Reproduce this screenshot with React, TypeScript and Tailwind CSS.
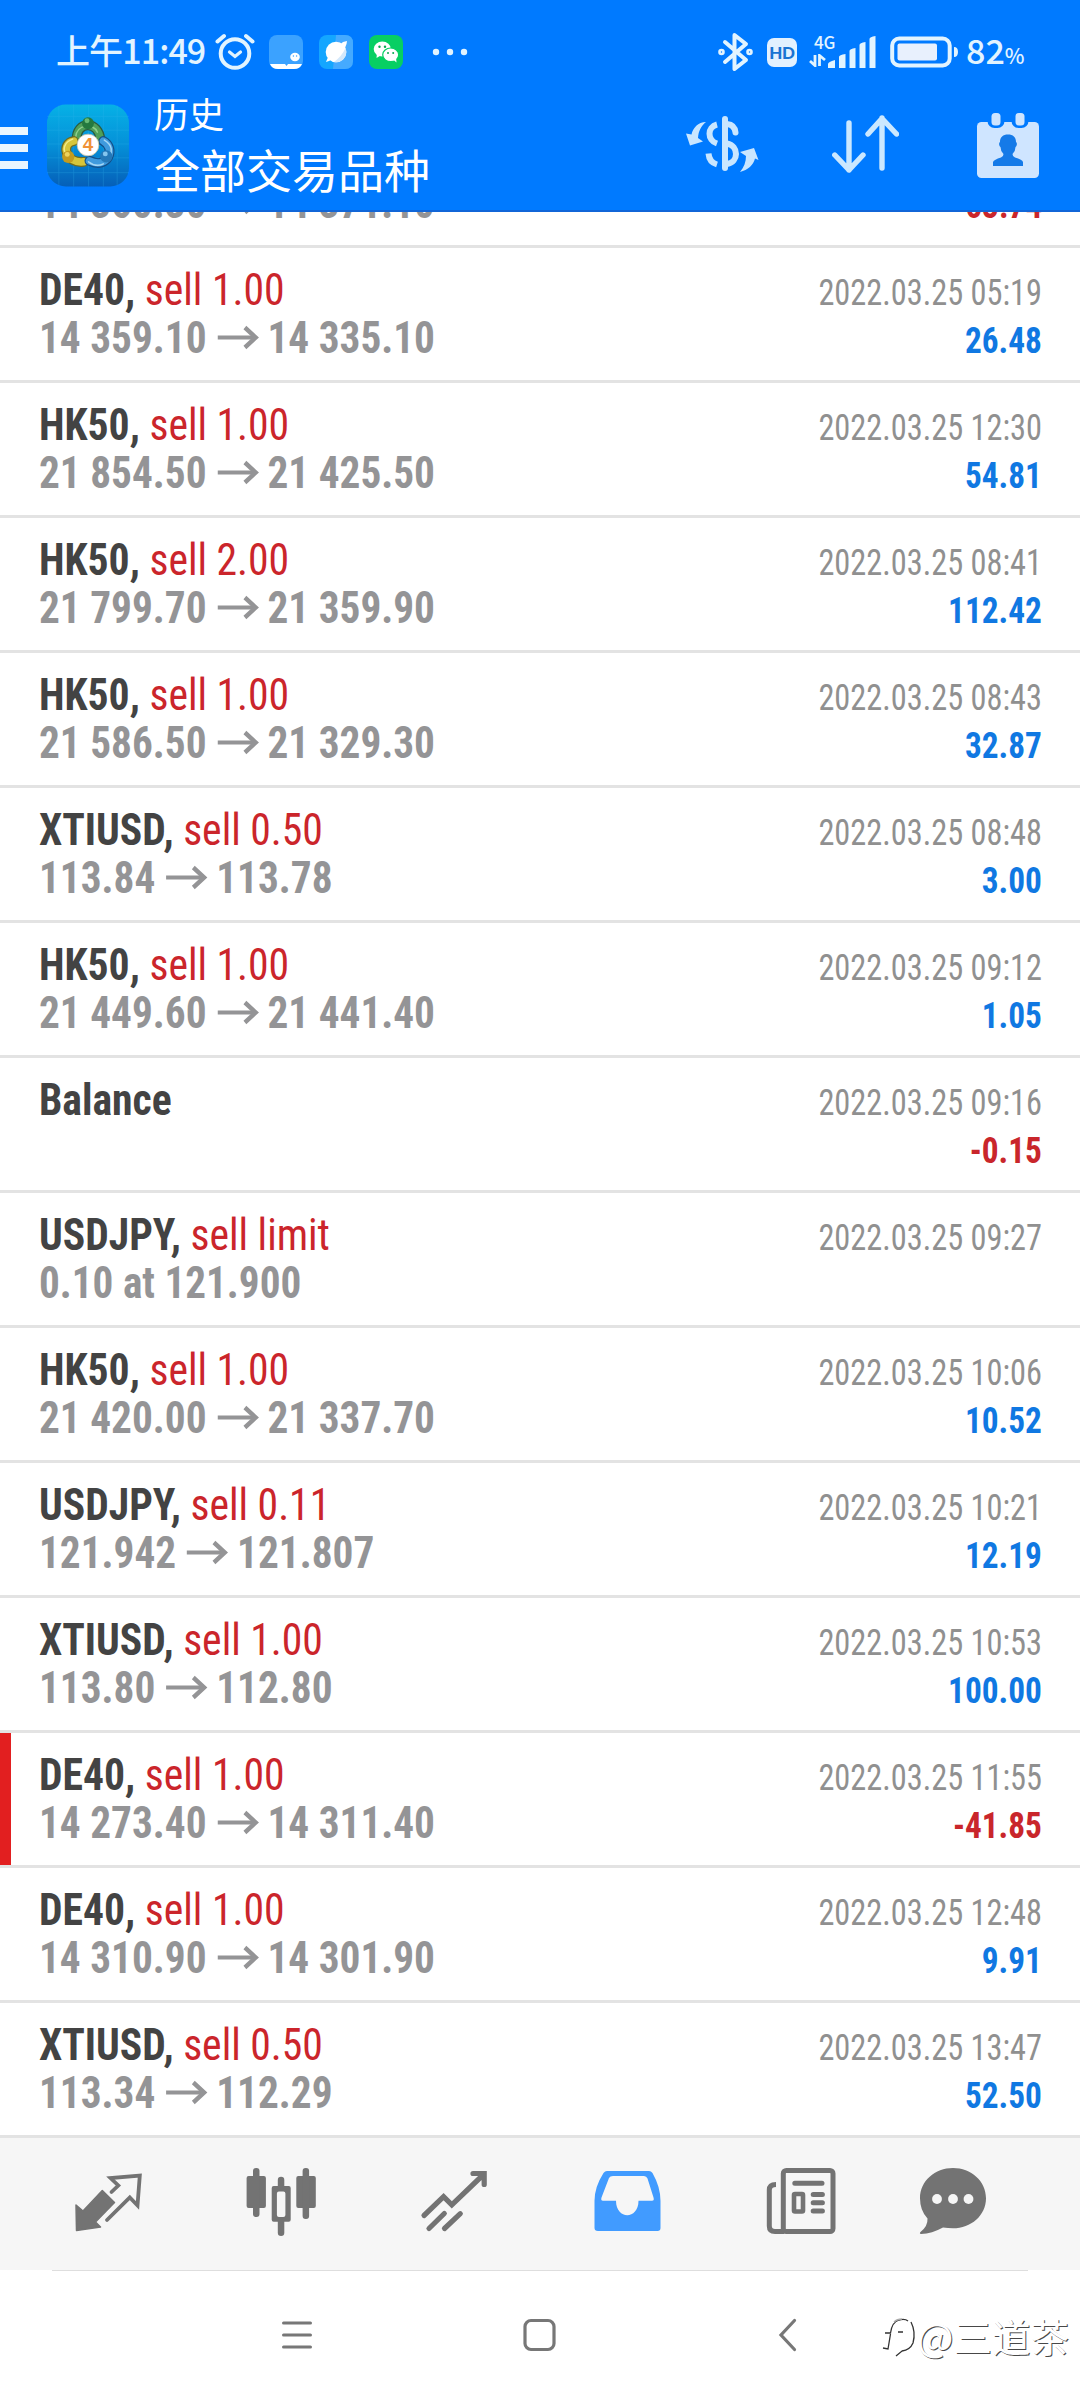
import type { ReactNode } from "react";

type Deal = {
  symbol?: string;
  action?: string;
  open?: string;
  close?: string;
  note?: string;
  time?: string;
  profit?: string;
  flagged?: boolean;
};

const deals: Deal[] = [
  { symbol: "DE40", action: "sell 1.00", open: "14 359.10", close: "14 335.10", time: "2022.03.25 05:19", profit: "26.48" },
  { symbol: "HK50", action: "sell 1.00", open: "21 854.50", close: "21 425.50", time: "2022.03.25 12:30", profit: "54.81" },
  { symbol: "HK50", action: "sell 2.00", open: "21 799.70", close: "21 359.90", time: "2022.03.25 08:41", profit: "112.42" },
  { symbol: "HK50", action: "sell 1.00", open: "21 586.50", close: "21 329.30", time: "2022.03.25 08:43", profit: "32.87" },
  { symbol: "XTIUSD", action: "sell 0.50", open: "113.84", close: "113.78", time: "2022.03.25 08:48", profit: "3.00" },
  { symbol: "HK50", action: "sell 1.00", open: "21 449.60", close: "21 441.40", time: "2022.03.25 09:12", profit: "1.05" },
  { symbol: "Balance", time: "2022.03.25 09:16", profit: "-0.15" },
  { symbol: "USDJPY", action: "sell limit", note: "0.10 at 121.900", time: "2022.03.25 09:27" },
  { symbol: "HK50", action: "sell 1.00", open: "21 420.00", close: "21 337.70", time: "2022.03.25 10:06", profit: "10.52" },
  { symbol: "USDJPY", action: "sell 0.11", open: "121.942", close: "121.807", time: "2022.03.25 10:21", profit: "12.19" },
  { symbol: "XTIUSD", action: "sell 1.00", open: "113.80", close: "112.80", time: "2022.03.25 10:53", profit: "100.00" },
  { symbol: "DE40", action: "sell 1.00", open: "14 273.40", close: "14 311.40", time: "2022.03.25 11:55", profit: "-41.85", flagged: true },
  { symbol: "DE40", action: "sell 1.00", open: "14 310.90", close: "14 301.90", time: "2022.03.25 12:48", profit: "9.91" },
  { symbol: "XTIUSD", action: "sell 0.50", open: "113.34", close: "112.29", time: "2022.03.25 13:47", profit: "52.50" },
];

function PriceArrow() {
  return (
    <svg className="ml-[11px] mr-[9px]" width="45" height="29" viewBox="0 0 45 29" fill="none" stroke="#949496">
      <path d="M0.5 12.5H41" strokeWidth="4" />
      <path d="M29.5 2.5 41 12.5 29.5 22.5" strokeWidth="4.6" />
    </svg>
  );
}

function DealRow({ deal }: { deal: Deal }) {
  const profitColor = deal.profit?.startsWith("-") ? "text-[#c9262b]" : "text-[#1078e2]";
  return (
    <li className="flex h-[135px] shrink-0 list-none border-b-[3px] border-[#e3e3e3]">
      <div className={deal.flagged ? "w-[11px] bg-[#e21f20]" : "w-[11px]"} />
      <div className="flex flex-1 items-start justify-between pt-[18px] pr-[38px] pl-[28px]">
        <div className="text-[44px] leading-[48px] whitespace-pre">
          <div className="h-[48px] w-max origin-left scale-x-[0.946]">
            {deal.symbol && <span className="font-bold text-[#434343]">{deal.action ? deal.symbol + "," : deal.symbol}</span>}
            {deal.action && <span className="text-[#cb252b]"> {deal.action}</span>}
          </div>
          {deal.open && (
            <div className="flex w-max origin-left scale-x-[0.938] font-bold text-[#949496]">
              <span>{deal.open}</span>
              <span className="flex pt-[11px]"><PriceArrow /></span>
              <span>{deal.close}</span>
            </div>
          )}
          {deal.note && <div className="w-max origin-left scale-x-[0.936] font-bold text-[#949496]">{deal.note}</div>}
        </div>
        <div className="pt-[3px] text-right text-[36px] leading-[48px]">
          <div className="h-[48px] origin-right scale-x-[0.898] text-[#909090]">{deal.time}</div>
          {deal.profit && <div className={"origin-right scale-x-[0.925] font-bold " + profitColor}>{deal.profit}</div>}
        </div>
      </div>
    </li>
  );
}

function StatusBar() {
  return (
    <div className="flex h-[92px] items-center pt-[12px] pl-[56px] text-[#e2f4ff]">
      <div className="w-[159px] text-[34px] leading-[34px] font-medium tracking-[-0.9px] whitespace-nowrap">
        <span className="inline-block -translate-y-[2px]">上午11:49</span>
      </div>
      <svg width="40" height="38" viewBox="0 0 40 38" fill="none" stroke="currentColor" strokeLinecap="round">
        <circle cx="20" cy="20.5" r="14.3" strokeWidth="4" />
        <path d="M2.5 8.5 9 3M37.5 8.5 31 3" strokeWidth="4" />
        <path d="M14.5 19 20 23.5 25.5 19" strokeWidth="3.2" />
      </svg>
      <svg className="ml-[14px]" width="34" height="34" viewBox="0 0 34 34">
        <rect width="34" height="34" rx="8" fill="#3ba2ff" />
        <path d="M1 29H33Q31 34 25 34H9Q3 34 1 29Z" fill="#fff" />
        <path d="M16 29h3l-1.5 2z" fill="#3ba2ff" />
        <ellipse cx="26" cy="22" rx="4.8" ry="4.2" fill="#fff" />
        <circle cx="24.4" cy="21" r=".7" fill="#3ba2ff" />
        <circle cx="27.6" cy="21" r=".7" fill="#3ba2ff" />
      </svg>
      <svg className="ml-[16px]" width="34" height="34" viewBox="0 0 34 34">
        <rect width="34" height="34" rx="8" fill="#14a6ff" />
        <path d="M17 0h9q8 0 8 8v18q0 8-8 8H14z" fill="#45aaff" />
        <path d="M7 27Q9 19 24 7l4-1q-1 12-18 20Z" fill="#fff" />
        <circle cx="17" cy="17" r="10.3" fill="#fff" />
        <path d="M26.5 13A10.3 10.3 0 0 1 15 27Q23 21 26.5 13Z" fill="#d3e8fb" />
      </svg>
      <svg className="ml-[16px]" width="34" height="34" viewBox="0 0 34 34">
        <rect width="34" height="34" rx="8" fill="#07cf63" />
        <ellipse cx="13.3" cy="14" rx="8.6" ry="7.4" fill="#fff" />
        <path d="M8 18l-.5 5 5-3z" fill="#fff" />
        <ellipse cx="21.7" cy="19.8" rx="8" ry="6.8" fill="#fff" stroke="#07cf63" strokeWidth="1.2" />
        <path d="M24 24.5l3.5 3-.5-5z" fill="#fff" />
        <g fill="#07a850">
          <circle cx="10.5" cy="11.8" r="1.2" />
          <circle cx="16" cy="11.8" r="1.2" />
          <circle cx="19" cy="18" r="1" />
          <circle cx="24.2" cy="18" r="1" />
        </g>
      </svg>
      <svg className="ml-[29px]" width="38" height="8" viewBox="0 0 38 8" fill="currentColor">
        <circle cx="4" cy="4" r="3.2" />
        <circle cx="18" cy="4" r="3.2" />
        <circle cx="32" cy="4" r="3.2" />
      </svg>
      <svg className="ml-[247px]" width="38" height="40" viewBox="0 0 38 40" fill="none" stroke="currentColor" strokeWidth="4" strokeLinejoin="round" strokeLinecap="round">
        <path d="M8 10 29 28 17.5 37V3L29 12 8 30" />
        <circle cx="4.5" cy="20" r="1.3" />
        <circle cx="32.5" cy="20" r="1.3" />
      </svg>
      <div className="ml-[12px] flex h-[29px] w-[30px] items-center justify-center rounded-[7px] bg-[#e2f1ff] font-['Lato'] text-[17px] leading-none font-black tracking-[-0.3px] text-[#1a74d2]">HD</div>
      <div className="ml-[12px] flex h-[34px] w-[22px] flex-col items-start">
        <span className="ml-[5px] -translate-y-[1px] text-[17px] leading-[15px] font-medium tracking-[-0.3px]">4G</span>
        <svg className="mt-[4px]" width="18" height="13" viewBox="0 0 18 13" fill="none" stroke="currentColor" strokeWidth="2.8">
          <path d="M6 1V11.5L1 7M10.5 12V1.5L16 6" />
        </svg>
      </div>
      <svg className="ml-[-3px]" width="50" height="34" viewBox="0 0 50 34" fill="currentColor">
        <path d="M0 33v-4q0-2 7-4v8zM11 33V22q0-2 6.500-3v14zM21.500 33V16q0-2 6-3v20zM31.500 33V10q0-2 6-3v26zM41.500 33V4q0-2 6-3v32z" />
      </svg>
      <svg className="ml-[12px]" width="70" height="32" viewBox="0 0 70 32">
        <rect x="2.2" y="2.5" width="57.5" height="27" rx="7" fill="none" stroke="currentColor" strokeWidth="4" />
        <rect x="7.5" y="7.5" width="39.5" height="17" rx="2" fill="#e8f0fd" />
        <path d="M64 11q4 0 4 5t-4 5z" fill="currentColor" />
      </svg>
      <div className="ml-[6px] flex items-baseline leading-[34px] font-medium">
        <span className="text-[34px]">82</span>
        <span className="text-[21px]">%</span>
      </div>
    </div>
  );
}

function AppLogo() {
  return (
    <svg width="82" height="83" viewBox="0 0 83 83">
      <defs>
        <linearGradient id="tile" x1="0" y1="0" x2="0" y2="1">
          <stop offset="0" stopColor="#06b1e6" />
          <stop offset="0.5" stopColor="#0590d8" />
          <stop offset="1" stopColor="#055fb8" />
        </linearGradient>
      </defs>
      <rect width="83" height="83" rx="19" fill="url(#tile)" />
      <path d="M12 1V82M27 0V83M42 0V83M57 0V83M71 1V82M0 12H83M0 26H83M0 40H83M0 54H83M0 69H83" stroke="#35b6ee" strokeWidth="0.7" opacity="0.35" />
      <g fill="none" strokeLinecap="round">
        <path d="M30 36C29 16 53 16 54 36" stroke="#2c5b3d" strokeWidth="10" />
        <path d="M30 36C29 16 53 16 54 36" stroke="#4f9f59" strokeWidth="7.5" />
        <path d="M29 33C30 20 47 18 51 28" stroke="#8fd08d" strokeWidth="1.5" />
        <path d="M27 37C14 39 18 60 37 58" stroke="#6f6c20" strokeWidth="10" />
        <path d="M27 37C14 39 18 60 37 58" stroke="#d6c53a" strokeWidth="7.5" />
        <path d="M26 35C17 38 16 46 19 49" stroke="#f2eb8b" strokeWidth="1.5" />
        <path d="M57 37C70 44 62 66 43 57" stroke="#14508a" strokeWidth="10" />
        <path d="M57 37C70 44 62 66 43 57" stroke="#3f9add" strokeWidth="7.5" />
        <path d="M58 36C67 41 66 49 63 54M42 58Q50 64 57 60" stroke="#a5d7f5" strokeWidth="1.5" />
      </g>
      <circle cx="41.5" cy="19" r="6" fill="#24793f" />
      <circle cx="40.5" cy="16.5" r="2.5" fill="#69bb75" />
      <circle cx="21.5" cy="53" r="6.2" fill="#c39b1f" />
      <circle cx="20.5" cy="50.5" r="2.5" fill="#ecd35d" />
      <circle cx="60" cy="52.5" r="6.2" fill="#2478b8" />
      <circle cx="59" cy="50" r="2.5" fill="#84c5ee" />
      <circle cx="41.5" cy="41" r="11" fill="#fff" stroke="#c9c2a6" strokeWidth="0.8" />
      <text x="41.5" y="47.5" textAnchor="middle" fontFamily="Liberation Sans" fontSize="19" fontWeight="bold" fill="#f09236">4</text>
    </svg>
  );
}

function TitleBar() {
  return (
    <div className="flex h-[120px] items-start border-b-2 border-[#1166d8] text-white">
      <div className="mt-[35px] flex w-[28px] flex-col gap-[9px]">
        <div className="h-[8px] bg-[#eaf6ff]" />
        <div className="h-[8px] bg-[#eaf6ff]" />
        <div className="h-[8px] bg-[#eaf6ff]" />
      </div>
      <div className="mt-[12px] ml-[19px]"><AppLogo /></div>
      <div className="ml-[25px] w-[532px] whitespace-nowrap">
        <div className="text-[35px] leading-[42px]">历史</div>
        <div className="text-[46px] leading-[68px]">全部交易品种</div>
      </div>
      <svg className="mt-[23px]" width="73" height="57" viewBox="0 0 73 57" fill="none" stroke="#c9e6ff" strokeWidth="6">
        <path d="M39 4V53" strokeLinecap="round" />
        <path d="M31 9.5C21 12 21 25 31 28.5M22.5 38.5C23 45 26 48 31 49.5" />
        <path d="M41 9C46 9.500 49 12.500 49.500 17.500" strokeLinecap="round" />
        <path d="M41 28.500C53 31 53 47 41 49" />
        <path d="M20 7C12 7 7 13 5.500 19.500L0 18.500 4 30.500 17 26.500 12 23C12.500 16 15 11 20 7ZM54 57C62 55 67.500 50 69 43.500L72.500 45 68 33 54 37 60 41C60 47 58 52 54 57Z" fill="#c9e6ff" stroke="none" />
      </svg>
      <svg className="mt-[22px] ml-[73px]" width="67" height="60" viewBox="0 0 67 60" fill="none" stroke="#cbe8ff" strokeWidth="5.4" strokeLinecap="round" strokeLinejoin="round">
        <path d="M17 9V56M2.800 41 17 56 31 41M50 54V4M36 20 50 4.500 64.500 20" />
      </svg>
      <svg className="mt-[20px] ml-[77px]" width="64" height="67" viewBox="0 0 64 67">
        <rect x="1" y="10" width="62" height="56" rx="4.5" fill="#cfe5ff" />
        <rect x="11.5" y="-4" width="17" height="20" rx="7" fill="#007aff" />
        <rect x="35.5" y="-4" width="17" height="20" rx="7" fill="#007aff" />
        <rect x="15.5" y="1" width="9" height="12.5" rx="3.5" fill="#cfe5ff" />
        <rect x="39.5" y="1" width="9" height="12.5" rx="3.5" fill="#cfe5ff" />
        <path d="M17 54v-4q1-2.500 8-4.500 2.500-.7 2.500-3.500-3-3-3-7c-1.500-1-2-4-.5-5 0-5 3-7.500 8-7.500s8 2.500 8 7.500c1.500 1 1 4-.5 5q0 4-3 7 0 2.800 2.500 3.500 7 2 8 4.500v4z" fill="#157ae8" />
      </svg>
    </div>
  );
}

function Tab({ last = false, children }: { last?: boolean; children: ReactNode }) {
  return <div className={last ? "flex w-[130px] items-center justify-center" : "flex w-[173px] items-center justify-center"}>{children}</div>;
}

function TabBar() {
  return (
    <nav className="flex h-[132px] shrink-0 bg-[#f6f6f6] pl-[22px] text-[#737373]">
      <Tab>
        <svg width="73" height="68" viewBox="0 0 73 68" fill="none" stroke="currentColor" strokeLinecap="round">
          <path d="M4 35 11 41 30.300 20.500 42.500 32.500 23.500 52 28.500 57 4.500 60.500Z" fill="currentColor" strokeWidth="1.5" strokeLinejoin="round" />
          <path d="M35 50 57.800 27.500 65.500 35.500 67.800 5.500 38.500 8 46.300 15.500 39.500 22" strokeWidth="3.8" />
        </svg>
      </Tab>
      <Tab>
        <svg width="75" height="76" viewBox="0 0 75 76" fill="currentColor">
          <rect x="2.6" y="10" width="19.3" height="32" rx="2" />
          <rect x="9" y="2" width="6.5" height="49" rx="3" />
          <path fillRule="evenodd" d="M29.700 20h15a2 2 0 0 1 2 2v31.800a2 2 0 0 1-2 2h-15a2 2 0 0 1-2-2V22a2 2 0 0 1 2-2zm5.200 5.500a2 2 0 0 0-2 2v21.500a2 2 0 0 0 2 2h4.500a2 2 0 0 0 2-2V27.500a2 2 0 0 0-2-2z" />
          <path d="M33.800 21V14a3.200 3.200 0 0 1 6.500 0v7zM33.800 54v12.800a3.200 3.200 0 0 0 6.500 0V54z" />
          <rect x="52.3" y="10" width="19.5" height="32" rx="2" />
          <rect x="58.6" y="2" width="6.5" height="51" rx="3" />
        </svg>
      </Tab>
      <Tab>
        <svg width="71" height="72" viewBox="0 0 71 72" fill="none" stroke="currentColor" strokeWidth="5.2" strokeLinecap="round">
          <path d="M5 47.500 24.600 28.700 32.800 36.800 64.500 6.500M54 5.500H65.200V16.500M10 60.500 25.300 45.500M25.500 60.500 41.300 45.700" />
        </svg>
      </Tab>
      <Tab>
        <svg width="71" height="70" viewBox="0 0 71 70">
          <path fillRule="evenodd" d="M15 2H57Q59 2 60.500 4 68.500 18 68.500 32V59Q68.500 62 65.500 62H6Q2.500 62 2.500 59V32Q2.500 18 11.500 4 13 2 15 2ZM21 7Q18 7 17 9L9.500 28.500Q8.500 31.700 11 31.700H24C24 51 46.500 51 46.500 31.700H60Q62.500 31.700 61.500 28.500L55.500 9.500Q54.500 7 52 7Z" fill="#419bff" />
        </svg>
      </Tab>
      <Tab>
        <svg width="73" height="76" viewBox="0 0 73 76" fill="none" stroke="currentColor" strokeWidth="5" strokeLinecap="round">
          <rect x="19.3" y="4.5" width="49.7" height="61" rx="3" />
          <path d="M12 18.500Q5.300 18.500 5.300 24V60Q5.300 65.500 11 65.500H20" strokeLinecap="butt" />
          <path d="M30.800 17.300H58M49.200 28.500H58.400M49.200 36.800H58.400M49.200 45H58.400" />
          <rect x="30" y="28" width="9" height="17.5" rx="1" strokeWidth="4.6" />
        </svg>
      </Tab>
      <Tab last>
        <svg width="69" height="76" viewBox="0 0 69 76" fill="currentColor">
          <path d="M35 2C53 2 68 15 68 32.200S53 62.300 35 62.300Q30 62.300 25 61.500 14 67.500 3 68 1 67.500 2.500 66 10 60 9.500 52.500 2 44.500 2 32.200C2 15 17 2 35 2Z" />
          <g fill="#f6f6f6">
            <circle cx="19" cy="33" r="4.9" />
            <circle cx="35" cy="33" r="4.9" />
            <circle cx="50.5" cy="33" r="4.9" />
          </g>
        </svg>
      </Tab>
    </nav>
  );
}

function SystemNav() {
  return (
    <div className="relative flex h-[129px] shrink-0 items-center bg-white pb-[1px] pl-[281px] text-[#777]">
      <svg width="32" height="32" viewBox="0 0 32 32" stroke="currentColor" strokeWidth="3" strokeLinecap="round">
        <path d="M2.500 4H29.500M2.500 16H29.500M2.500 28H29.500" />
      </svg>
      <svg className="ml-[210px]" width="33" height="34" viewBox="0 0 33 34" fill="none" stroke="currentColor" strokeWidth="3.2">
        <rect x="2" y="2.5" width="29" height="29" rx="6" />
      </svg>
      <svg className="ml-[222px]" width="20" height="34" viewBox="0 0 20 34" fill="none" stroke="currentColor" strokeWidth="3.2" strokeLinecap="round">
        <path d="M16.500 2.500 3 17 16.500 31.500" />
      </svg>
      <div className="absolute top-[39px] left-[882px] flex items-center text-white">
        <svg className="mt-[4px]" width="36" height="46" viewBox="0 0 36 46" fill="none" stroke="#333" strokeWidth="1.3">
          <path d="M3 19H8.500Q10 8 17 6 23 4.500 26 7M29 8Q34 18 31 29 28 36 20 37L14 42M8.500 20 6 35 1 34M16 18h5" />
          <path d="M12 8Q15 5 20 5" stroke="#aaa" />
        </svg>
        <span className="ml-[-1px] font-['Noto_Sans_CJK_SC'] text-[38.5px] leading-[46px] whitespace-nowrap [text-shadow:1px_1px_0_#484848]">@三道茶</span>
      </div>
    </div>
  );
}

export default function App() {
  return (
    <div className="flex h-[2400px] w-[1080px] flex-col overflow-hidden bg-white font-['Roboto_Condensed','Noto_Sans_CJK_SC',sans-serif]">
      <header className="h-[212px] shrink-0 bg-[#007aff] font-['Noto_Sans_CJK_SC',sans-serif]">
        <StatusBar />
        <TitleBar />
      </header>
      <ul className="flex h-[36px] shrink-0 flex-col justify-end overflow-hidden">
        <DealRow deal={{ open: "14 360.30", close: "14 371.10", profit: "-63.74" }} />
      </ul>
      <ul className="shrink-0">
        {deals.map((deal) => (
          <DealRow key={deal.time} deal={deal} />
        ))}
      </ul>
      <TabBar />
      <div className="mx-[52px] h-px shrink-0 bg-[#dedede]" />
      <SystemNav />
    </div>
  );
}
